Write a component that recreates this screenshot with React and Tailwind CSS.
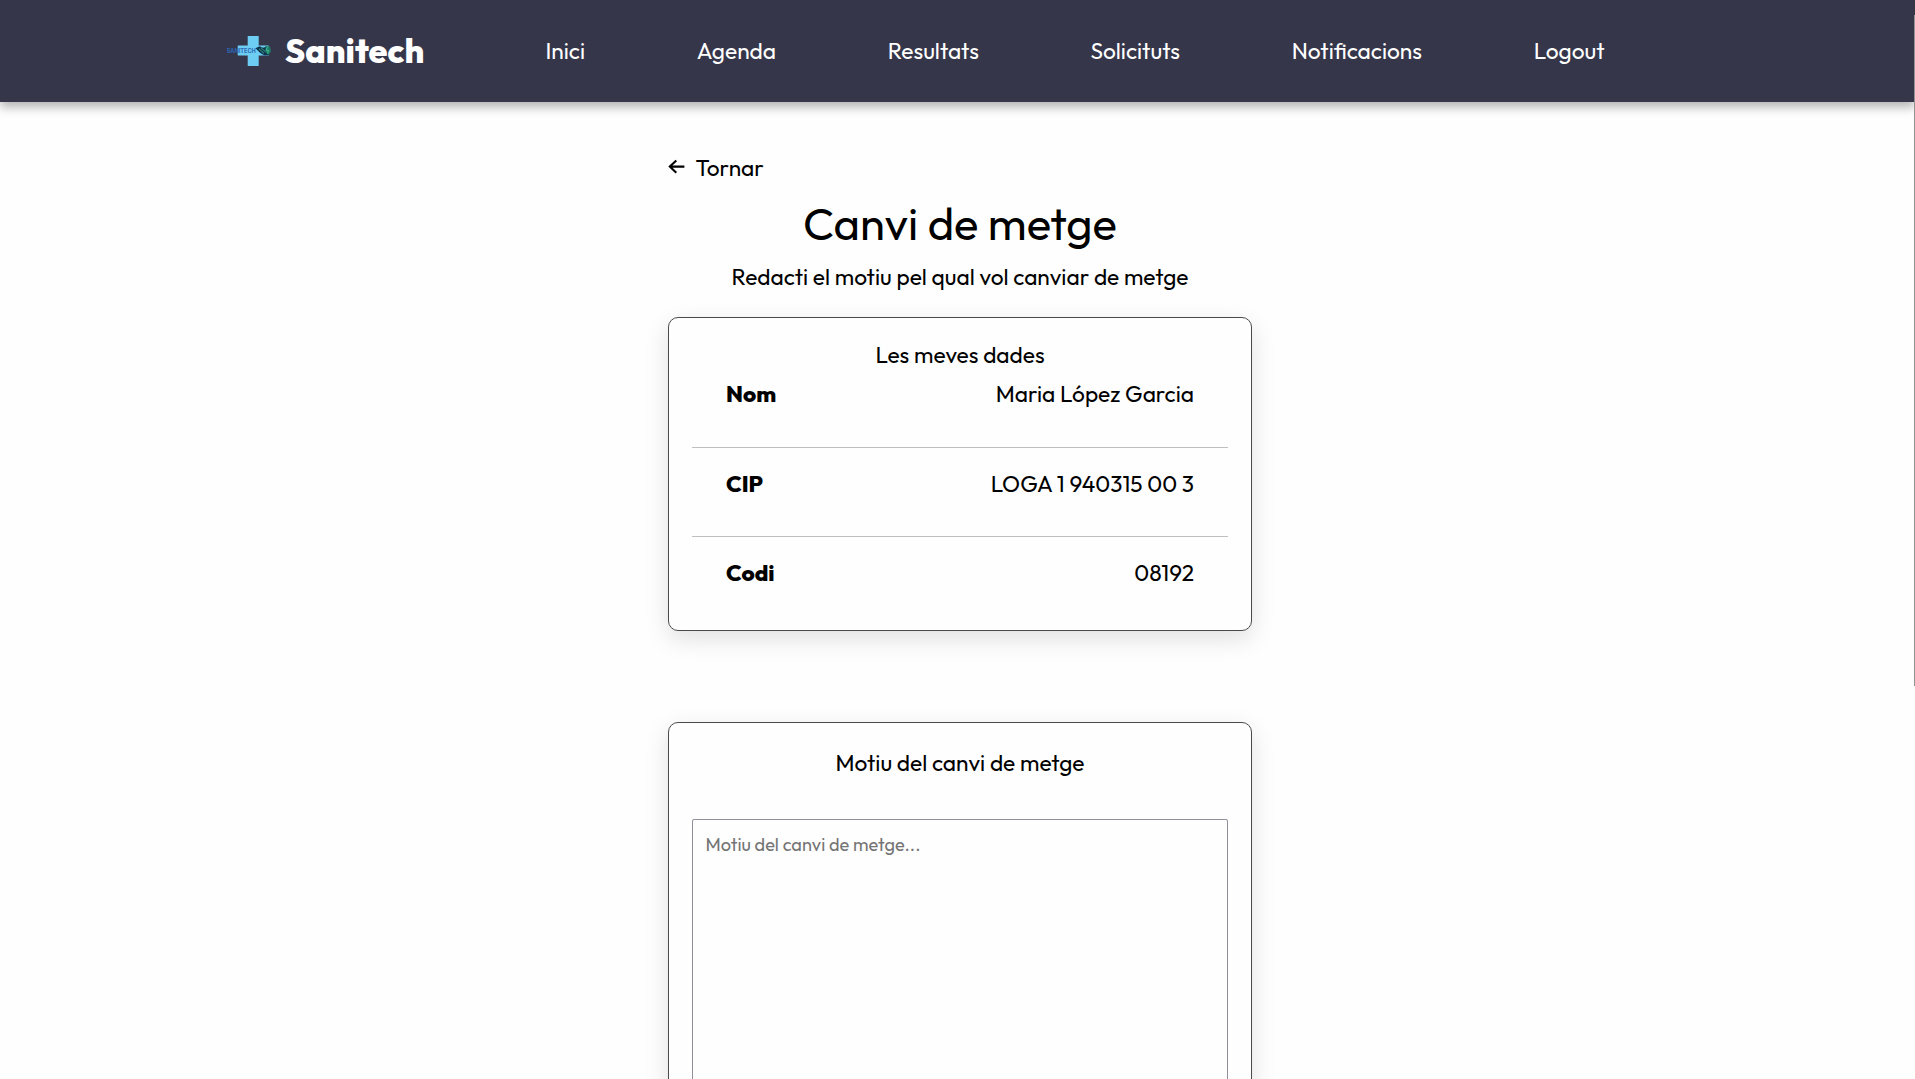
const NAV = ["Inici", "Agenda", "Resultats", "Solicituts", "Notificacions", "Logout"];

const ROWS = [
  { label: "Nom", value: "Maria López Garcia" },
  { label: "CIP", value: "LOGA 1 940315 00 3" },
  { label: "Codi", value: "08192" },
];

function Logo() {
  return (
    <svg width="48" height="32" viewBox="0 0 48 32" className="block shrink-0" aria-hidden="true">
      <path d="M21.7 1h11v9.5h10V20.5h-10V31h-11V20.5h-10V10.500h10z" fill="#6dcdf2" />
      <text x="0.8" y="17.500" fontSize="5.6" fontWeight="700" textLength="29" fontFamily="Inter, sans-serif" fill="#2c66b4">
        SANITECH
      </text>
      <path d="M29.500 13.300l4-2 3.500 1.500 3-1 4.500 5-2 3.500h-4.500l-4-2.500z" fill="#0f3450" />
      <path d="M39.500 11l4.500.5 1 5-2.500 3.500-3-3z" fill="#1d7a68" />
      <path d="M33 13.800l5 4.500M35 12.800l4.500 4M41.500 12l-1.500 3.200h2.500l-1 3.500" fill="none" stroke="#4fd3a0" strokeWidth="0.7" />
    </svg>
  );
}

function BackArrow() {
  return (
    <svg width="18" height="16" viewBox="0 0 18 16" fill="none" stroke="currentColor" strokeWidth="2.100" className="block" aria-hidden="true">
      <path d="M8.300 1.400 1.800 7.600l6.500 6.200M2 7.600h14.400" />
    </svg>
  );
}

export default function App() {
  return (
    <div className="relative h-[1079px] w-full overflow-hidden bg-[#fefefe] font-['Outfit',sans-serif] text-[22.7px] leading-7 text-black">
      <header className="flex h-[102px] items-center bg-[#36364a] pl-[226px] text-white shadow-[0_5px_10px_rgba(0,0,0,0.3)]">
        <Logo />
        <span className="ml-[11px] w-[260.500px] text-[34px] font-extrabold leading-10">Sanitech</span>
        <nav className="flex gap-[111.700px]">
          {NAV.map((item) => (
            <a key={item} className="whitespace-nowrap">{item}</a>
          ))}
        </nav>
      </header>

      <main className="ml-[668px] w-[584px]">
        <a className="mt-[52px] flex h-7 gap-[9.500px]">
          <span className="pt-[5px]"><BackArrow /></span>
          Tornar
        </a>
        <h1 className="mt-[14px] text-center text-[45.400px] leading-[56px]">Canvi de metge</h1>
        <p className="mt-[11px] text-center">Redacti el motiu pel qual vol canviar de metge</p>

        <section className="mt-[26px] h-[314px] rounded-[10px] border border-[#4a4a4a] px-[23px] pt-[23px] shadow-[0_8px_24px_rgba(0,0,0,0.12)]">
          <h2 className="mb-[11px] text-center">Les meves dades</h2>
          <div className="divide-y divide-[#bfbfbf]">
            {ROWS.map(({ label, value }) => (
              <div key={label} className="flex justify-between px-[34px] pb-[38px] pt-[22px] first:pb-[39px] first:pt-0">
                <span className="font-extrabold">{label}</span>
                <span>{value}</span>
              </div>
            ))}
          </div>
        </section>

        <section className="mt-[91px] h-[600px] rounded-[10px] border border-[#4a4a4a] px-[23px] pt-[26px] shadow-[0_8px_24px_rgba(0,0,0,0.12)]">
          <h2 className="text-center">Motiu del canvi de metge</h2>
          <textarea
            className="mt-[42px] block h-[400px] w-full resize-none rounded-[2px] border border-[#8f8f9d] bg-transparent px-[12.500px] py-[13px] text-[18.150px] leading-6 placeholder:text-[#757575]"
            placeholder="Motiu del canvi de metge..."
          />
        </section>
      </main>

      <div className="absolute right-0 top-[15px] h-[671px] w-px bg-[#929292]" />
    </div>
  );
}
